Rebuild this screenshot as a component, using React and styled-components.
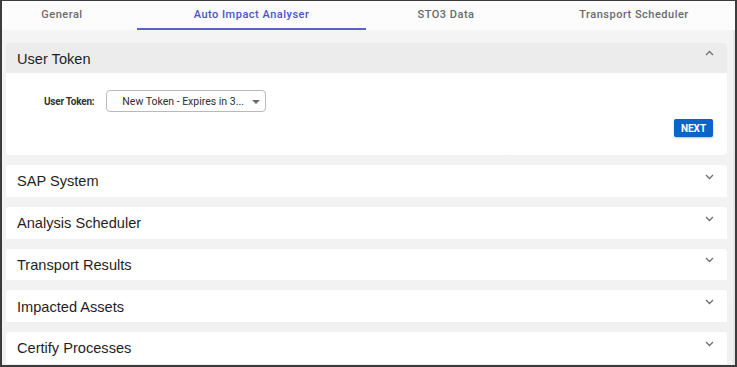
import React from "react";
import styled, { createGlobalStyle } from "styled-components";

const Global = createGlobalStyle`
  html, body { margin: 0; padding: 0; background: #ffffff; }
  * { box-sizing: border-box; }
`;

const Frame = styled.div`
  width: 737px;
  height: 367px;
  overflow: hidden;
  border-style: solid;
  border-color: #3c3c3c;
  border-width: 1px 2px 2px 2px;
  background: #f2f2f2;
  display: flex;
  flex-direction: column;
  font-family: Roboto, "Liberation Sans", sans-serif;
`;

const TabBar = styled.div`
  height: 29px;
  flex: none;
  background: #fcfcfc;
  overflow: hidden;
  display: flex;
`;

const TabStrip = styled.div`
  display: flex;
  margin-left: -15px;
  height: 100%;
`;

const Tab = styled.div`
  width: ${(p) => p.$w}px;
  flex: none;
  display: flex;
  align-items: center;
  justify-content: center;
  padding-bottom: 1px;
  font-size: 11px;
  font-weight: 500;
  letter-spacing: 0.5px;
  color: ${(p) => (p.$active ? "#4a54c4" : "#6a6a6a")};
  border-bottom: 2px solid ${(p) => (p.$active ? "#5a62cc" : "transparent")};
`;

const Content = styled.div`
  flex: 1;
  display: flex;
  flex-direction: column;
  gap: 10px;
  padding: 13px 6px 0 4px;
  background: linear-gradient(#f4f4f4, #f1f1f1);
  border-right: 2px solid #e6e6e6;
`;

const Panel = styled.div`
  background: #ffffff;
  border-radius: 3px;
  box-shadow: 0 0 1px rgba(0, 0, 0, 0.06);
  flex: none;
`;

const PanelHeader = styled.div`
  height: ${(p) => (p.$open ? 30 : 31.75)}px;
  display: flex;
  align-items: center;
  justify-content: space-between;
  padding: 0 13px 0 11px;
  background: ${(p) => (p.$open ? "#ececec" : "#ffffff")};
  border-radius: 3px 3px 0 0;
`;

const PanelTitle = styled.span`
  font-family: "Liberation Sans", Arial, sans-serif;
  font-size: 14.6px;
  color: #1f1f1f;
  margin-top: ${(p) => (p.$open ? 2 : 1)}px;
`;

const Chevron = styled.svg`
  width: 9px;
  height: 6px;
  margin-top: ${(p) => (p.$up ? -10 : -8)}px;
`;

const PanelBody = styled.div`
  height: 82px;
  display: flex;
  flex-direction: column;
  padding: 18px 14px 0 38px;
`;

const FieldRow = styled.div`
  display: flex;
  align-items: center;
  gap: 12px;
`;

const Label = styled.span`
  font-size: 10px;
  font-weight: 700;
  letter-spacing: -0.25px;
  color: #333333;
  margin-top: -1px;
`;

const Select = styled.div`
  width: 160px;
  height: 22px;
  border: 1px solid #b9b9b9;
  border-radius: 4px;
  display: flex;
  align-items: center;
  justify-content: space-between;
  padding: 0 5px 0 15px;
  font-size: 10.5px;
  color: #2e2e2e;
  margin-top: -1px;
`;

const Caret = styled.span`
  width: 0;
  height: 0;
  border-left: 4px solid transparent;
  border-right: 4px solid transparent;
  border-top: 4px solid #6a6a6a;
  margin-top: 1px;
`;

const ButtonRow = styled.div`
  display: flex;
  justify-content: flex-end;
  margin-top: 7px;
`;

const Button = styled.button`
  width: 39px;
  height: 18px;
  border: none;
  border-radius: 2px;
  background: #0b64c6;
  color: #ffffff;
  font-family: Roboto, "Liberation Sans", sans-serif;
  font-size: 10px;
  font-weight: 700;
  padding: 0;
  box-shadow: 0 1px 2px rgba(0, 0, 0, 0.25);
`;

const ChevronIcon = ({ up }) => (
  <Chevron $up={up} viewBox="0 0 9 6">
    <polyline
      points={up ? "1,5 4.5,1.5 8,5" : "1,1 4.5,4.5 8,1"}
      fill="none"
      stroke="#6f6f6f"
      strokeWidth="1.3"
    />
  </Chevron>
);

const tabs = [
  { label: "General", w: 150 },
  { label: "Auto Impact Analyser", w: 229, active: true },
  { label: "STO3 Data", w: 160 },
  { label: "Transport Scheduler", w: 216 },
];

const sections = [
  "SAP System",
  "Analysis Scheduler",
  "Transport Results",
  "Impacted Assets",
  "Certify Processes",
];

export default function App() {
  return (
    <>
      <Global />
      <Frame>
        <TabBar>
          <TabStrip>
            {tabs.map((t) => (
              <Tab key={t.label} $w={t.w} $active={t.active}>
                {t.label}
              </Tab>
            ))}
          </TabStrip>
        </TabBar>
        <Content>
          <Panel>
            <PanelHeader $open>
              <PanelTitle $open>User Token</PanelTitle>
              <ChevronIcon up />
            </PanelHeader>
            <PanelBody>
              <FieldRow>
                <Label>User Token:</Label>
                <Select>
                  <span>New Token - Expires in 3...</span>
                  <Caret />
                </Select>
              </FieldRow>
              <ButtonRow>
                <Button>NEXT</Button>
              </ButtonRow>
            </PanelBody>
          </Panel>
          {sections.map((s) => (
            <Panel key={s}>
              <PanelHeader>
                <PanelTitle>{s}</PanelTitle>
                <ChevronIcon />
              </PanelHeader>
            </Panel>
          ))}
        </Content>
      </Frame>
    </>
  );
}
